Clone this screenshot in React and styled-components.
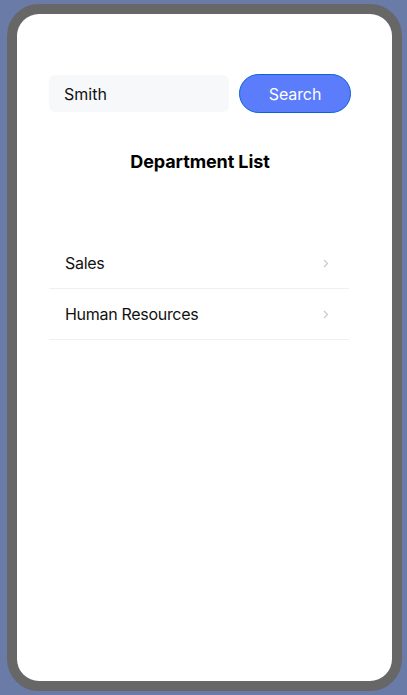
import styled, { createGlobalStyle } from 'styled-components';

const GlobalStyle = createGlobalStyle`
  html, body {
    margin: 0;
    padding: 0;
    background: #6a7ba8;
  }
  body {
    font-family: Inter, "Noto Sans", sans-serif;
  }
`;

const Page = styled.div`
  width: 407px;
  height: 695px;
  padding: 4px 5px 4px 7px;
  box-sizing: border-box;
`;

const Frame = styled.div`
  width: 395px;
  height: 687px;
  box-sizing: border-box;
  border: 10px solid #676767;
  border-radius: 32px;
  background: #676767;
`;

const Screen = styled.div`
  height: 100%;
  background: #ffffff;
  border-radius: 22px;
  padding: 60px 0 0 32px;
  box-sizing: border-box;
`;

const Content = styled.div`
  width: 302px;
  display: flex;
  flex-direction: column;
`;

const SearchRow = styled.div`
  display: flex;
  align-items: center;
  gap: 10px;
`;

const SearchInput = styled.input`
  width: 180px;
  height: 37px;
  box-sizing: border-box;
  border: none;
  outline: none;
  border-radius: 6px;
  background: #f7f8fa;
  padding: 0 15px;
  font-family: Inter, sans-serif;
  font-size: 16px;
  color: #111;
`;

const SearchButton = styled.button`
  width: 112px;
  height: 39px;
  box-sizing: border-box;
  border: 1px solid #0b63d6;
  border-radius: 20px;
  background: #5b7cfb;
  color: #fff;
  font-family: Inter, sans-serif;
  font-size: 16px;
  letter-spacing: -0.1px;
  cursor: pointer;
`;

const Title = styled.h2`
  margin: 38px 0 0;
  text-align: center;
  font-size: 18px;
  font-weight: 700;
  letter-spacing: -0.1px;
  color: #000;
  line-height: 22px;
`;

const List = styled.ul`
  list-style: none;
  margin: 65px 0 0;
  padding: 0;
  width: 300px;
`;

const Row = styled.li`
  display: flex;
  align-items: center;
  justify-content: space-between;
  height: 50px;
  padding: 0 20px 0 16px;
  border-bottom: 1px solid #f0f0f2;
  font-size: 16px;
  letter-spacing: -0.3px;
  color: #111;
  cursor: pointer;
`;

const Chevron = () => (
  <svg width="6" height="9" viewBox="0 0 6 9">
    <path d="M1 1l3.5 3.5L1 8" fill="none" stroke="#c9c9cc" strokeWidth="1.2" />
  </svg>
);

const departments = ['Sales', 'Human Resources'];

const App = () => (
  <>
    <GlobalStyle />
    <Page>
      <Frame>
        <Screen>
          <Content>
            <SearchRow>
              <SearchInput defaultValue="Smith" />
              <SearchButton>Search</SearchButton>
            </SearchRow>
            <Title>Department List</Title>
            <List>
              {departments.map(d => (
                <Row key={d}>
                  {d}
                  <Chevron />
                </Row>
              ))}
            </List>
          </Content>
        </Screen>
      </Frame>
    </Page>
  </>
);

export default App;
